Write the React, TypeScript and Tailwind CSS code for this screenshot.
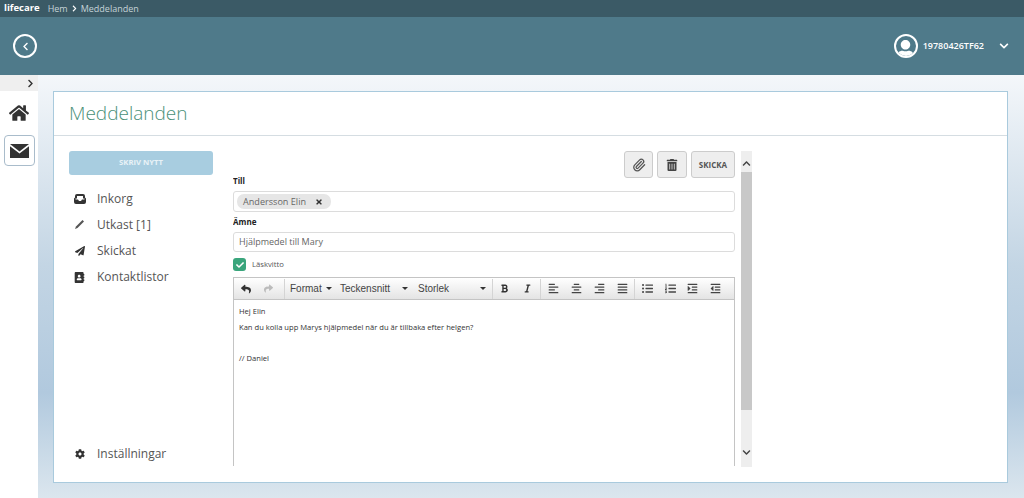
import {
  FaAlignCenter,
  FaAlignJustify,
  FaAlignLeft,
  FaAlignRight,
  FaAddressBook,
  FaBold,
  FaCheck,
  FaChevronDown,
  FaChevronLeft,
  FaChevronRight,
  FaChevronUp,
  FaCog,
  FaHome,
  FaIndent,
  FaItalic,
  FaListOl,
  FaListUl,
  FaOutdent,
  FaPaperPlane,
  FaReply,
  FaShare,
  FaTimes,
  FaTrashAlt,
  FaUser,
} from "react-icons/fa";
import { Paperclip } from "lucide-react";
import type { IconType } from "react-icons";

function InboxIcon() {
  return (
    <svg width="12" height="11" viewBox="0 0 12 11">
      <path d="M3 1h6a2 2 0 0 1 2 2v1.500l1 1V9a2 2 0 0 1-2 2H2a2 2 0 0 1-2-2V5.500l1-1V3a2 2 0 0 1 2-2z" fill="#333" />
      <path d="M3 3h6v2.500h1.500v1H8L7 8H5L4 6.500H1.500v-1H3z" fill="#fff" />
    </svg>
  );
}

function PenIcon() {
  return (
    <svg width="11" height="11" viewBox="0 0 11 11">
      <path d="M1 10l1-2.500L8.500 1 10 2.500 3.500 9z" fill="#555" />
    </svg>
  );
}

function MailIcon() {
  return (
    <svg width="19" height="14" viewBox="0 0 19 14">
      <path d="M0 0h19L9.500 7.500z" fill="#333" />
      <path d="M0 2.200l9.500 7.300L19 2.200V14H0z" fill="#333" />
    </svg>
  );
}

const menu: { label: string; icon: React.ReactNode }[] = [
  { label: "Inkorg", icon: <InboxIcon /> },
  { label: "Utkast [1]", icon: <PenIcon /> },
  { label: "Skickat", icon: <FaPaperPlane size={10} /> },
  { label: "Kontaktlistor", icon: <FaAddressBook size={11} /> },
];

function Caret() {
  return <span className="ml-1 inline-block h-0 w-0 border-x-[3px] border-t-[3px] border-x-transparent border-t-[#333]" />;
}

function ToolGroup({ icons, width }: { icons: IconType[]; width: string }) {
  return (
    <div className={`flex h-[20px] items-center border-l border-[#d4d4d4] pl-[1px] ${width}`}>
      {icons.map((Icon, i) => (
        <span key={i} className="flex w-[23px] justify-center text-[#444]">
          <Icon size={11} />
        </span>
      ))}
    </div>
  );
}

function Composer() {
  return (
    <div className="w-[502px] font-['Open_Sans',sans-serif] text-[#555]">
      <div className="flex h-[27px] justify-end gap-[4px]">
        <button className="flex w-[29px] items-center justify-center rounded-[3px] border border-[#ccc] bg-[#eee] text-[#555]">
          <Paperclip size={14} strokeWidth={2.2} />
        </button>
        <button className="flex w-[30px] items-center justify-center rounded-[3px] border border-[#ccc] bg-[#eee] text-[#444]">
          <FaTrashAlt size={12} />
        </button>
        <button className="w-[44px] rounded-[3px] border border-[#ccc] bg-[#eee] text-[8px] font-bold text-[#555]">
          SKICKA
        </button>
      </div>

      <p className="-mt-[3px] text-[8px] leading-[12px] font-bold text-[#222]">Till</p>
      <div className="mt-[4px] flex h-[21px] items-center rounded-[3px] border border-[#dcdcdc] px-[3px]">
        <span className="flex h-[15px] w-[94px] items-center rounded-[7px] bg-[#e6e6e6] pl-[6px] text-[9.100px] text-[#666]">
          Andersson Elin
          <FaTimes size={8} className="ml-[9px] text-[#333]" />
        </span>
      </div>

      <p className="mt-[4px] text-[8px] leading-[12px] font-bold text-[#222]">Ämne</p>
      <div className="mt-[4px] flex h-[20px] items-center rounded-[3px] border border-[#dcdcdc] px-[5px] text-[9px] text-[#666]">
        Hjälpmedel till Mary
      </div>

      <div className="mt-[6px] flex h-[13px] items-center gap-[6px]">
        <span className="flex h-[13px] w-[13px] items-center justify-center rounded-[3px] bg-[#3aa57c] text-white">
          <FaCheck size={8} />
        </span>
        <span className="text-[7.700px] text-[#555]">Läskvitto</span>
      </div>

      <div className="mt-[6px] border-x border-t border-[#c4c4c4]">
        <div className="flex h-[22px] items-center border-b border-[#c4c4c4] bg-gradient-to-b from-[#fff] to-[#e4e4e4] font-['Liberation_Sans',sans-serif]">
          <div className="flex h-[20px] w-[50px] items-center gap-[13px] pl-[7px]">
            <FaReply size={10} className="text-[#333]" />
            <FaShare size={9} className="text-[#bbb]" />
          </div>
          <div className="flex h-[20px] w-[208px] items-center border-l border-[#d4d4d4] pl-[5px] text-[10px] text-[#444]">
            <span className="flex w-[50px] items-center">Format<Caret /></span>
            <span className="flex w-[78px] items-center justify-between pr-[10px]">Teckensnitt<Caret /></span>
            <span className="flex w-[68px] items-center justify-between">Storlek<Caret /></span>
          </div>
          <div className="flex h-[20px] w-[48px] items-center gap-[14px] border-l border-[#d4d4d4] pl-[7px] text-[#333]">
            <FaBold size={9} />
            <FaItalic size={9} />
          </div>
          <ToolGroup width="w-[94px]" icons={[FaAlignLeft, FaAlignCenter, FaAlignRight, FaAlignJustify]} />
          <ToolGroup width="w-[93px]" icons={[FaListUl, FaListOl, FaIndent, FaOutdent]} />
        </div>
        <div className="h-[166px] px-[5px] pt-[3px] text-[7.600px] leading-[16px] text-[#333]">
          <p>Hej Elin</p>
          <p>Kan du kolla upp Marys hjälpmedel när du är tillbaka efter helgen?</p>
          <p className="mt-[15px]">// Daniel</p>
        </div>
      </div>
    </div>
  );
}

export default function App() {
  return (
    <div className="flex h-[498px] w-[1024px] flex-col overflow-hidden font-['Open_Sans',sans-serif]">
      <div className="flex h-[17px] items-center bg-[#3b5a66] px-[4px] text-[9px] text-[#c5d3d8]">
        <span className="text-[9.500px] font-bold text-white">lifecare</span>
        <span className="ml-[8px]">Hem</span>
        <FaChevronRight size={7} className="ml-[3px] text-white" />
        <span className="ml-[3px]">Meddelanden</span>
      </div>

      <header className="flex h-[58px] items-center justify-between bg-[#4f7a8a] pr-[15px] pl-[13px]">
        <span className="flex h-[24px] w-[24px] items-center justify-center rounded-full border-2 border-white text-white">
          <FaChevronLeft size={9} />
        </span>
        <div className="flex items-center text-white">
          <span className="flex h-[24px] w-[24px] items-end justify-center overflow-hidden rounded-full border-2 border-white">
            <FaUser size={19} className="-mb-[3px]" />
          </span>
          <span className="ml-[5px] text-[9px] font-semibold">19780426TF62</span>
          <FaChevronDown size={10} className="ml-[15px]" />
        </div>
      </header>

      <div className="flex min-h-0 flex-1">
        <aside className="w-[38px] bg-white">
          <div className="flex h-[16px] items-center justify-end bg-[#efefef] pr-[3px] text-[#333]">
            <FaChevronRight size={9} />
          </div>
          <div className="flex h-[44px] items-center justify-center text-[#333]">
            <FaHome size={20} />
          </div>
          <div className="mx-auto flex h-[31px] w-[31px] items-center justify-center rounded-[4px] border border-[#a9bccb]">
            <MailIcon />
          </div>
        </aside>

        <main className="flex-1 bg-[linear-gradient(180deg,#f4f7fa_0%,#c3d5e4_45%,#b1c9de_75%,#dbe6ee_100%)] pt-[16px] pr-[16px] pb-[15px] pl-[15px]">
          <section className="flex h-full flex-col border border-[#a9cadd] bg-white">
            <h1 className="flex h-[44px] shrink-0 items-center border-b border-[#d5dde2] pl-[15px] text-[19px] font-light text-[#4a9078]">
              Meddelanden
            </h1>
            <div className="flex min-h-0 flex-1 pt-[15px] pl-[15px]">
              <div className="flex h-[313px] w-[144px] flex-col justify-between">
                <div>
                  <button className="block h-[24px] w-full rounded-[3px] bg-[#a8cde0] text-[7.700px] font-bold text-[#e8f2f7]">
                    SKRIV NYTT
                  </button>
                  <ul className="mt-[13px] flex flex-col gap-[5.300px]">
                    {menu.map(({ label, icon }) => (
                      <li key={label} className="flex h-[21px] items-center text-[12px] text-[#555]">
                        <span className="flex w-[22px] justify-center pr-[1px] text-[#333]">{icon}</span>
                        <span className="ml-[6px]">{label}</span>
                      </li>
                    ))}
                  </ul>
                </div>
                <div className="flex h-[21px] items-center text-[12px] text-[#555]">
                  <span className="flex w-[22px] justify-center text-[#333]">
                    <FaCog size={10} />
                  </span>
                  <span className="ml-[6px]">Inställningar</span>
                </div>
              </div>

              <div className="ml-[20px] h-[316px] overflow-hidden">
                <Composer />
              </div>

              <div className="ml-[6px] flex h-[316px] w-[11px] flex-col bg-[#eeeeee] text-[#444]">
                <span className="flex h-[21px] w-full items-center justify-center pt-[3px]">
                  <FaChevronUp size={9} />
                </span>
                <span className="h-[238px] w-full bg-[#c8c8c8]" />
                <span className="flex w-full flex-1 items-end justify-center pb-[10px]">
                  <FaChevronDown size={9} />
                </span>
              </div>
            </div>
          </section>
        </main>
      </div>
    </div>
  );
}
